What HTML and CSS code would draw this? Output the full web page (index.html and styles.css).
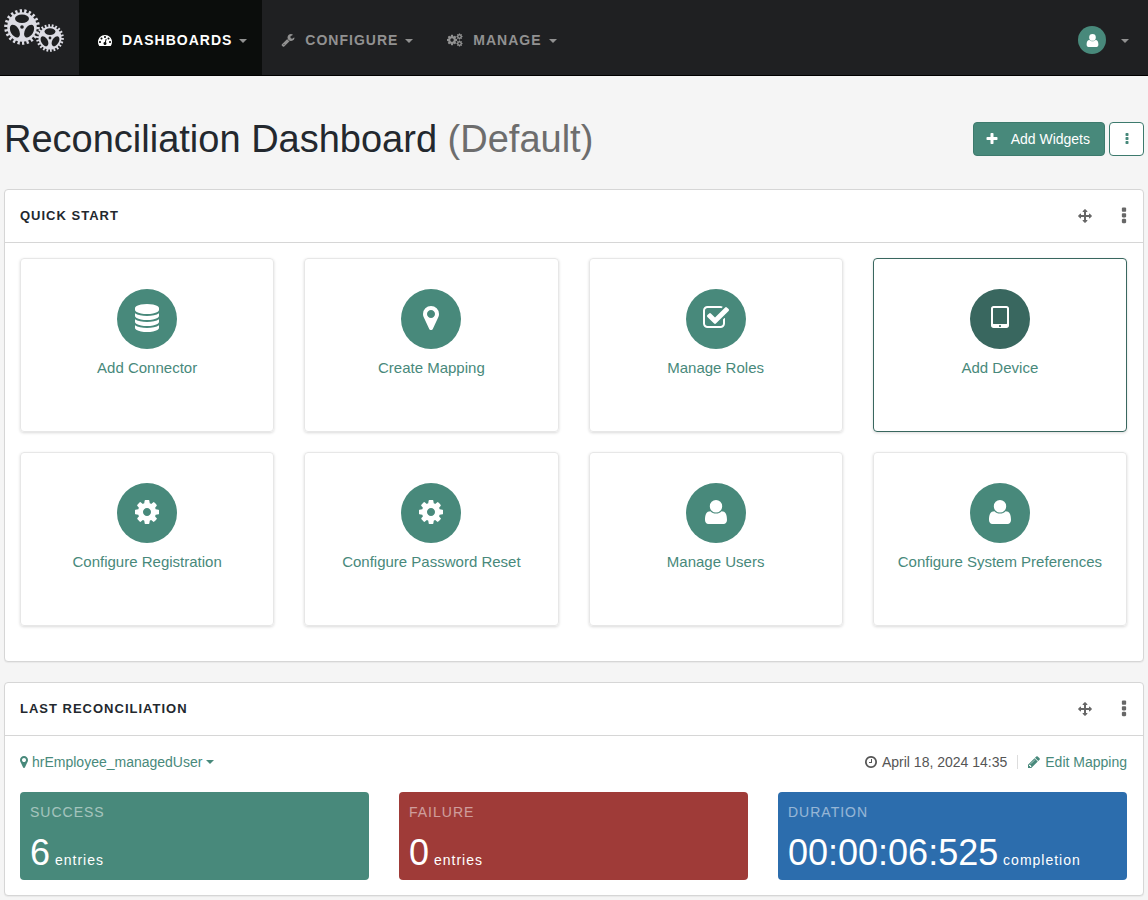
FILE: index.html
```html
<!DOCTYPE html>
<html lang="en">
<head>
    <meta charset="UTF-8">
    <meta name="viewport" content="width=device-width, initial-scale=1.0">
    <title>Reconciliation Dashboard</title>
    <link rel="stylesheet" href="styles.css">
</head>
<body>
    <!-- Icons -->
    <svg class="sprite" aria-hidden="true">
        <symbol id="i-dashboard" viewBox="0 0 1792 1792"><path d="M384 1152q0-53-37.5-90.5t-90.5-37.5-90.5 37.5-37.5 90.5 37.5 90.5 90.5 37.5 90.5-37.5 37.5-90.5zm192-448q0-53-37.5-90.5t-90.5-37.5-90.5 37.5-37.5 90.5 37.5 90.5 90.5 37.5 90.5-37.5 37.5-90.5zm428 481l101-382q6-26-7.5-48.5t-38.5-29.5-48 6.5-30 39.5l-101 382q-60 5-107 43.5t-63 98.5q-20 77 20 146t117 89 146-20 89-117q16-60-6-117t-72-91zm660-33q0-53-37.5-90.5t-90.5-37.5-90.5 37.5-37.5 90.5 37.5 90.5 90.5 37.5 90.5-37.5 37.5-90.5zm-640-640q0-53-37.5-90.5t-90.5-37.5-90.5 37.5-37.5 90.5 37.5 90.5 90.5 37.5 90.5-37.5 37.5-90.5zm448 192q0-53-37.5-90.5t-90.5-37.5-90.5 37.5-37.5 90.5 37.5 90.5 90.5 37.5 90.5-37.5 37.5-90.5zm320 448q0 261-141 483-19 29-54 29h-1402q-35 0-54-29-141-221-141-483 0-182 71-348t191-286 286-191 348-71 348 71 286 191 191 286 71 348z"/></symbol>
        <symbol id="i-wrench" viewBox="0 0 1792 1792"><path d="M448 1472q0-26-19-45t-45-19-45 19-19 45 19 45 45 19 45-19 19-45zm644-420l-682 682q-37 37-90 37-52 0-91-37l-106-108q-38-36-38-90 0-53 38-91l681-681q39 98 114.500 173.500t173.500 114.500zm634-435q0 39-23 106-47 134-164.500 217.500t-258.500 83.500q-185 0-316.500-131.500t-131.500-316.500 131.500-316.500 316.500-131.500q58 0 121.500 16.500t107.500 46.500q16 11 16 28t-16 28l-293 169v224l193 107q5-3 79-48.500t135.500-81 70.500-35.500q15 0 23.500 10t8.500 25z"/></symbol>
        <symbol id="i-cog" viewBox="0 0 1792 1792"><path d="M1152 896q0-106-75-181t-181-75-181 75-75 181 75 181 181 75 181-75 75-181zm512-109v222q0 12-8 23t-20 13l-185 28q-19 54-39 91 35 50 107 138 10 12 10 25t-9 23q-27 37-99 108t-94 71q-12 0-26-9l-138-108q-44 23-91 38-16 136-29 186-7 28-36 28h-222q-14 0-24.5-8.5t-11.500-21.500l-28-184q-49-16-90-37l-141 107q-10 9-25 9-14 0-25-11-126-114-165-168-7-10-7-23 0-12 8-23 15-21 51-66.500t54-70.500q-27-50-41-99l-183-27q-13-2-21-12.500t-8-23.500v-222q0-12 8-23t19-13l186-28q14-46 39-92-40-57-107-138-10-12-10-24 0-10 9-23 26-36 98.500-107.500t94.500-71.500q13 0 26 10l138 107q44-23 91-38 16-136 29-186 7-28 36-28h222q14 0 24.500 8.500t11.500 21.500l28 184q49 16 90 37l142-107q9-9 24-9 13 0 25 10 129 119 165 170 7 8 7 22 0 12-8 23-15 21-51 66.500t-54 70.500q26 50 41 98l183 28q13 2 21 12.500t8 23.500z"/></symbol>
        <symbol id="i-cogs" viewBox="0 0 16 14">
            <use href="#i-cog" x="-1" y="1" width="12" height="12"/>
            <use href="#i-cog" x="9" y="0" width="7" height="7"/>
            <use href="#i-cog" x="9" y="7" width="7" height="7"/>
        </symbol>
        <symbol id="i-user" viewBox="-3 -2 28 28"><path d="M11 0a6.200 6.300 0 0 1 0 12.600a6.200 6.300 0 0 1 0-12.600zM5.400 11.200C6.800 12.700 8.800 13.600 11 13.600s4.200-.9 5.600-2.400C20.500 11.200 22 14.500 22 20c0 2.200-1.300 4-3.400 4H3.400C1.300 24 0 22.200 0 20c0-5.500 1.500-8.800 5.400-8.800z"/></symbol>
        <symbol id="i-plus" viewBox="0 0 1792 1792"><path d="M1600 736v192q0 40-28 68t-68 28h-416v416q0 40-28 68t-68 28h-192q-40 0-68-28t-28-68v-416h-416q-40 0-68-28t-28-68v-192q0-40 28-68t68-28h416v-416q0-40 28-68t68-28h192q40 0 68 28t28 68v416h416q40 0 68 28t28 68z"/></symbol>
        <symbol id="i-dots" viewBox="0 0 1792 1792"><path d="M1088 1248v192q0 40-28 68t-68 28h-192q-40 0-68-28t-28-68v-192q0-40 28-68t68-28h192q40 0 68 28t28 68zm0-512v192q0 40-28 68t-68 28h-192q-40 0-68-28t-28-68v-192q0-40 28-68t68-28h192q40 0 68 28t28 68zm0-512v192q0 40-28 68t-68 28h-192q-40 0-68-28t-28-68v-192q0-40 28-68t68-28h192q40 0 68 28t28 68z"/></symbol>
        <symbol id="i-move" viewBox="0 0 1792 1792"><path d="M1792 896q0 26-19 45l-256 256q-19 19-45 19t-45-19-19-45v-128h-384v384h128q26 0 45 19t19 45-19 45l-256 256q-19 19-45 19t-45-19l-256-256q-19-19-19-45t19-45 45-19h128v-384h-384v128q0 26-19 45t-45 19-45-19l-256-256q-19-19-19-45t19-45l256-256q19-19 45-19t45 19 19 45v128h384v-384h-128q-26 0-45-19t-19-45 19-45l256-256q19-19 45-19t45 19l256 256q19 19 19 45t-19 45-45 19h-128v384h384v-128q0-26 19-45t45-19 45 19l256 256q19 19 19 45z"/></symbol>
        <symbol id="i-database" viewBox="0 0 1792 1792"><path d="M896 768q237 0 443-43t325-127v170q0 69-103 128t-280 93.500-385 34.500-385-34.500-280-93.500-103-128v-170q119 84 325 127t443 43zm0 768q237 0 443-43t325-127v170q0 69-103 128t-280 93.500-385 34.500-385-34.500-280-93.500-103-128v-170q119 84 325 127t443 43zm0-384q237 0 443-43t325-127v170q0 69-103 128t-280 93.500-385 34.500-385-34.500-280-93.500-103-128v-170q119 84 325 127t443 43zm0-1152q208 0 385 34.500t280 93.500 103 128v128q0 69-103 128t-280 93.500-385 34.500-385-34.500-280-93.500-103-128v-128q0-69 103-128t280-93.500 385-34.500z"/></symbol>
        <symbol id="i-pin" viewBox="384 128 1024 1536"><path d="M1152 640q0-106-75-181t-181-75-181 75-75 181 75 181 181 75 181-75 75-181zm256 0q0 109-33 179l-364 774q-16 33-47.500 52t-67.500 19-67.500-19-46.500-52l-365-774q-33-70-33-179 0-212 150-362t362-150 362 150 150 362z"/></symbol>
        <symbol id="i-check" viewBox="0 0 1792 1792"><path d="M1472 930v318q0 119-84.500 203.500t-203.500 84.500h-832q-119 0-203.500-84.500t-84.500-203.500v-832q0-119 84.500-203.500t203.500-84.500h832q63 0 117 25 15 7 18 23 3 17-9 29l-49 49q-10 10-23 10-3 0-9-2-23-6-45-6h-832q-66 0-113 47t-47 113v832q0 66 47 113t113 47h832q66 0 113-47t47-113v-254q0-13 9-22l64-64q10-10 23-10 6 0 12 3 20 8 20 29zm231-489l-814 814q-24 24-57 24t-57-24l-430-430q-24-24-24-57t24-57l110-110q24-24 57-24t57 24l263 263 647-647q24-24 57-24t57 24l110 110q24 24 24 57t-24 57z"/></symbol>
        <symbol id="i-tablet" viewBox="0 0 1792 1792"><path d="M960 1408q0-26-19-45t-45-19-45 19-19 45 19 45 45 19 45-19 19-45zm384-160v-960q0-13-9.500-22.500t-22.500-9.500h-832q-13 0-22.500 9.500t-9.500 22.500v960q0 13 9.500 22.500t22.500 9.500h832q13 0 22.500-9.500t9.500-22.500zm128-960v1088q0 66-47 113t-113 47h-832q-66 0-113-47t-47-113v-1088q0-66 47-113t113-47h832q66 0 113 47t47 113z"/></symbol>
        <symbol id="i-clock" viewBox="0 0 1792 1792"><path d="M1024 544v448q0 14-9 23t-23 9h-320q-14 0-23-9t-9-23v-64q0-14 9-23t23-9h224v-352q0-14 9-23t23-9h64q14 0 23 9t9 23zm416 352q0-148-73-273t-198-198-273-73-273 73-198 198-73 273 73 273 198 198 273 73 273-73 198-198 73-273zm224 0q0 209-103 385.500t-279.500 279.500-385.500 103-385.500-103-279.500-279.500-103-385.500 103-385.500 279.500-279.500 385.500-103 385.500 103 279.500 279.500 103 385.500z"/></symbol>
        <symbol id="i-pencil" viewBox="0 0 1792 1792"><path d="M491 1536l91-91-235-235-91 91v107h128v128h107zm523-928q0-22-22-22-10 0-17 7l-542 542q-7 7-7 17 0 22 22 22 10 0 17-7l542-542q7-7 7-17zm-54-192l416 416-832 832h-416v-416zm683 96q0 53-37 90l-166 166-416-416 166-165q36-38 90-38 53 0 91 38l235 234q37 39 37 91z"/></symbol>
        <symbol id="i-gear" viewBox="-18 -18 36 36">
            <circle r="16" fill="none" stroke="#dcdce4" stroke-width="3.600" pathLength="44" stroke-dasharray="1 1"/>
            <circle r="14.800" fill="#dcdce4"/>
            <g fill="#1f2022">
                <ellipse cy="-8.200" rx="7" ry="4.200"/>
                <ellipse cy="-8.200" rx="7" ry="4.200" transform="rotate(120)"/>
                <ellipse cy="-8.200" rx="7" ry="4.200" transform="rotate(240)"/>
                <circle r="1.800"/>
            </g>
        </symbol>
    </svg>

    <nav class="navbar">
        <a class="brand" href="#" aria-label="Home">
            <svg class="logo" viewBox="0 0 64 54">
                <use href="#i-gear" x="4" y="9" width="36" height="36"/>
                <use href="#i-gear" x="36" y="24" width="28" height="28"/>
            </svg>
        </a>
        <a class="nav-link active" href="#">
            <svg class="icon"><use href="#i-dashboard"/></svg>
            <span>DASHBOARDS</span>
            <i class="caret"></i>
        </a>
        <a class="nav-link" href="#">
            <svg class="icon"><use href="#i-wrench"/></svg>
            <span>CONFIGURE</span>
            <i class="caret"></i>
        </a>
        <a class="nav-link" href="#">
            <svg class="icon icon-wide"><use href="#i-cogs"/></svg>
            <span>MANAGE</span>
            <i class="caret"></i>
        </a>
        <button class="user-menu" type="button" aria-label="User menu">
            <span class="avatar"><svg><use href="#i-user"/></svg></span>
            <i class="caret"></i>
        </button>
    </nav>

    <main class="page">
        <header class="page-header">
            <h1>Reconciliation Dashboard <span class="muted">(Default)</span></h1>
            <div class="actions">
                <button class="btn btn-primary" type="button">
                    <svg class="icon"><use href="#i-plus"/></svg>
                    Add Widgets
                </button>
                <button class="btn btn-outline" type="button" aria-label="More options">
                    <svg class="icon"><use href="#i-dots"/></svg>
                </button>
            </div>
        </header>

        <!-- Quick start -->
        <section class="panel">
            <div class="panel-header">
                <h2>QUICK START</h2>
                <button class="icon-btn" type="button" aria-label="Move widget"><svg class="icon"><use href="#i-move"/></svg></button>
                <button class="icon-btn" type="button" aria-label="Widget options"><svg class="icon icon-dots"><use href="#i-dots"/></svg></button>
            </div>
            <div class="cards">
                <a class="card" href="#">
                    <span class="circle"><svg><use href="#i-database"/></svg></span>
                    Add Connector
                </a>
                <a class="card" href="#">
                    <span class="circle"><svg class="pin-lg"><use href="#i-pin"/></svg></span>
                    Create Mapping
                </a>
                <a class="card" href="#">
                    <span class="circle"><svg><use href="#i-check"/></svg></span>
                    Manage Roles
                </a>
                <a class="card selected" href="#">
                    <span class="circle"><svg><use href="#i-tablet"/></svg></span>
                    Add Device
                </a>
                <a class="card" href="#">
                    <span class="circle"><svg><use href="#i-cog"/></svg></span>
                    Configure Registration
                </a>
                <a class="card" href="#">
                    <span class="circle"><svg><use href="#i-cog"/></svg></span>
                    Configure Password Reset
                </a>
                <a class="card" href="#">
                    <span class="circle"><svg><use href="#i-user"/></svg></span>
                    Manage Users
                </a>
                <a class="card" href="#">
                    <span class="circle"><svg><use href="#i-user"/></svg></span>
                    Configure System Preferences
                </a>
            </div>
        </section>

        <!-- Last reconciliation -->
        <section class="panel">
            <div class="panel-header">
                <h2>LAST RECONCILIATION</h2>
                <button class="icon-btn" type="button" aria-label="Move widget"><svg class="icon"><use href="#i-move"/></svg></button>
                <button class="icon-btn" type="button" aria-label="Widget options"><svg class="icon icon-dots"><use href="#i-dots"/></svg></button>
            </div>
            <div class="recon">
                <div class="recon-bar">
                    <button class="mapping" type="button">
                        <svg class="pin-sm"><use href="#i-pin"/></svg>
                        hrEmployee_managedUser
                        <i class="caret"></i>
                    </button>
                    <span class="date"><svg class="icon"><use href="#i-clock"/></svg>April 18, 2024 14:35</span>
                    <a class="edit" href="#"><svg class="icon"><use href="#i-pencil"/></svg>Edit Mapping</a>
                </div>
                <div class="stats">
                    <div class="stat success">
                        <div class="stat-label">SUCCESS</div>
                        <div class="stat-value"><span class="number">6</span> entries</div>
                    </div>
                    <div class="stat failure">
                        <div class="stat-label">FAILURE</div>
                        <div class="stat-value"><span class="number">0</span> entries</div>
                    </div>
                    <div class="stat duration">
                        <div class="stat-label">DURATION</div>
                        <div class="stat-value"><span class="number">00:00:06:525</span> completion</div>
                    </div>
                </div>
            </div>
        </section>
    </main>
</body>
</html>
```
FILE: styles.css
```css
* {
    box-sizing: border-box;
}

body {
    margin: 0;
    background: #f5f5f5;
    color: #23282e;
    font-family: "Helvetica Neue", "Liberation Sans", Arial, sans-serif;
    font-size: 14px;
    line-height: 20px;
}

a {
    color: #48897b;
    text-decoration: none;
}

button {
    padding: 0;
    border: none;
    background: none;
    font: inherit;
    cursor: pointer;
}

svg {
    fill: currentColor;
    flex-shrink: 0;
}

.sprite {
    display: none;
}

.icon {
    width: 14px;
    height: 14px;
}

.caret {
    border-top: 4px solid currentColor;
    border-left: 4px solid transparent;
    border-right: 4px solid transparent;
}

/* Top navigation */
.navbar {
    display: flex;
    height: 76px;
    background: #1f2022;
    border-bottom: 1px solid #000;
}

.brand {
    width: 79px;
}

.logo {
    display: block;
    width: 64px;
    height: 54px;
}

.nav-link {
    display: flex;
    align-items: center;
    padding: 5px 15px 0 19px;
    color: #919191;
    font-weight: bold;
    letter-spacing: 1px;
}

.nav-link span {
    margin: 0 7px 0 10px;
}

.nav-link .icon-wide {
    width: 16px;
}

.nav-link.active {
    background: #0b0d0c;
    color: #fff;
}

.nav-link .caret,
.user-menu .caret {
    border-top-color: #919191;
    margin-top: 2px;
}

.user-menu {
    display: flex;
    align-items: center;
    gap: 15px;
    margin-left: auto;
    padding: 5px 19px 0 0;
}

.avatar {
    display: flex;
    align-items: center;
    justify-content: center;
    width: 28px;
    height: 28px;
    border-radius: 50%;
    background: #48897b;
    color: #fff;
}

.avatar svg {
    width: 15px;
    height: 15px;
}

/* Page header */
.page {
    padding: 40px 4px 4px;
}

.page-header {
    display: flex;
    align-items: center;
    justify-content: space-between;
    margin-bottom: 27px;
}

h1 {
    margin: 0;
    font-size: 38px;
    line-height: 46px;
    font-weight: 300;
}

.muted {
    color: #6d6d6d;
}

.actions {
    display: flex;
    gap: 4px;
}

.btn {
    display: flex;
    align-items: center;
    justify-content: center;
    height: 34px;
    border: 1px solid #3d7a6d;
    border-radius: 4px;
}

.btn-primary {
    gap: 12px;
    padding: 0 14px 0 11px;
    background: #48897b;
    color: #fff;
}

.btn-outline {
    width: 35px;
    background: #fff;
    color: #48897b;
}

/* Panels */
.panel {
    margin-bottom: 20px;
    background: #fff;
    border: 1px solid #d6d6d6;
    border-radius: 4px;
    box-shadow: 0 1px 1px rgba(0, 0, 0, 0.05);
}

.panel-header {
    display: flex;
    align-items: center;
    height: 53px;
    padding: 0 9px 0 15px;
    border-bottom: 1px solid #d6d6d6;
}

h2 {
    flex: 1;
    margin: 0;
    font-size: 13px;
    line-height: 20px;
    font-weight: bold;
    letter-spacing: 1px;
}

.icon-btn {
    display: flex;
    margin-left: 22px;
    color: #676767;
}

.icon-dots {
    width: 20px;
    height: 20px;
}

/* Quick start cards */
.cards {
    display: grid;
    grid-template-columns: repeat(4, 1fr);
    gap: 20px 30px;
    padding: 15px 16px 35px 15px;
}

.card {
    display: flex;
    flex-direction: column;
    align-items: center;
    min-height: 174px;
    padding: 30px 10px;
    border: 1px solid #e7e7e7;
    border-radius: 4px;
    box-shadow: 0 1px 3px rgba(0, 0, 0, 0.15);
    font-size: 15px;
}

.card.selected {
    border-color: #39675f;
}

.circle {
    display: flex;
    align-items: center;
    justify-content: center;
    width: 60px;
    height: 60px;
    margin-bottom: 9px;
    padding-bottom: 2px;
    border-radius: 50%;
    background: #48897b;
    color: #fff;
}

.selected .circle {
    background: #39675f;
}

.circle svg {
    width: 28px;
    height: 28px;
}

.circle .pin-lg {
    width: 16px;
    height: 24px;
}

/* Last reconciliation */
.recon {
    padding: 16px 16px 15px 15px;
}

.recon-bar {
    display: flex;
    align-items: center;
    margin-bottom: 20px;
}

.mapping {
    display: flex;
    align-items: center;
    gap: 4px;
    margin-right: auto;
    color: #48897b;
}

.pin-sm {
    width: 8px;
    height: 12px;
}

.date,
.edit {
    display: flex;
    align-items: center;
    gap: 4px;
}

.date {
    color: #555;
}

.edit {
    margin-left: 10px;
}

.edit::before {
    content: "";
    width: 1px;
    height: 14px;
    margin-right: 5px;
    background: #ddd;
}

.stats {
    display: grid;
    grid-template-columns: repeat(3, 1fr);
    gap: 30px;
}

.stat {
    padding: 10px 10px 6px;
    border-radius: 4px;
    color: #fff;
    letter-spacing: 1px;
}

.stat-label {
    margin-bottom: 10px;
    opacity: 0.5;
}

.number {
    font-size: 36px;
    line-height: 42px;
    letter-spacing: normal;
}

.success {
    background: #48897b;
}

.failure {
    background: #9f3b38;
}

.duration {
    background: #2c6dad;
}
```
